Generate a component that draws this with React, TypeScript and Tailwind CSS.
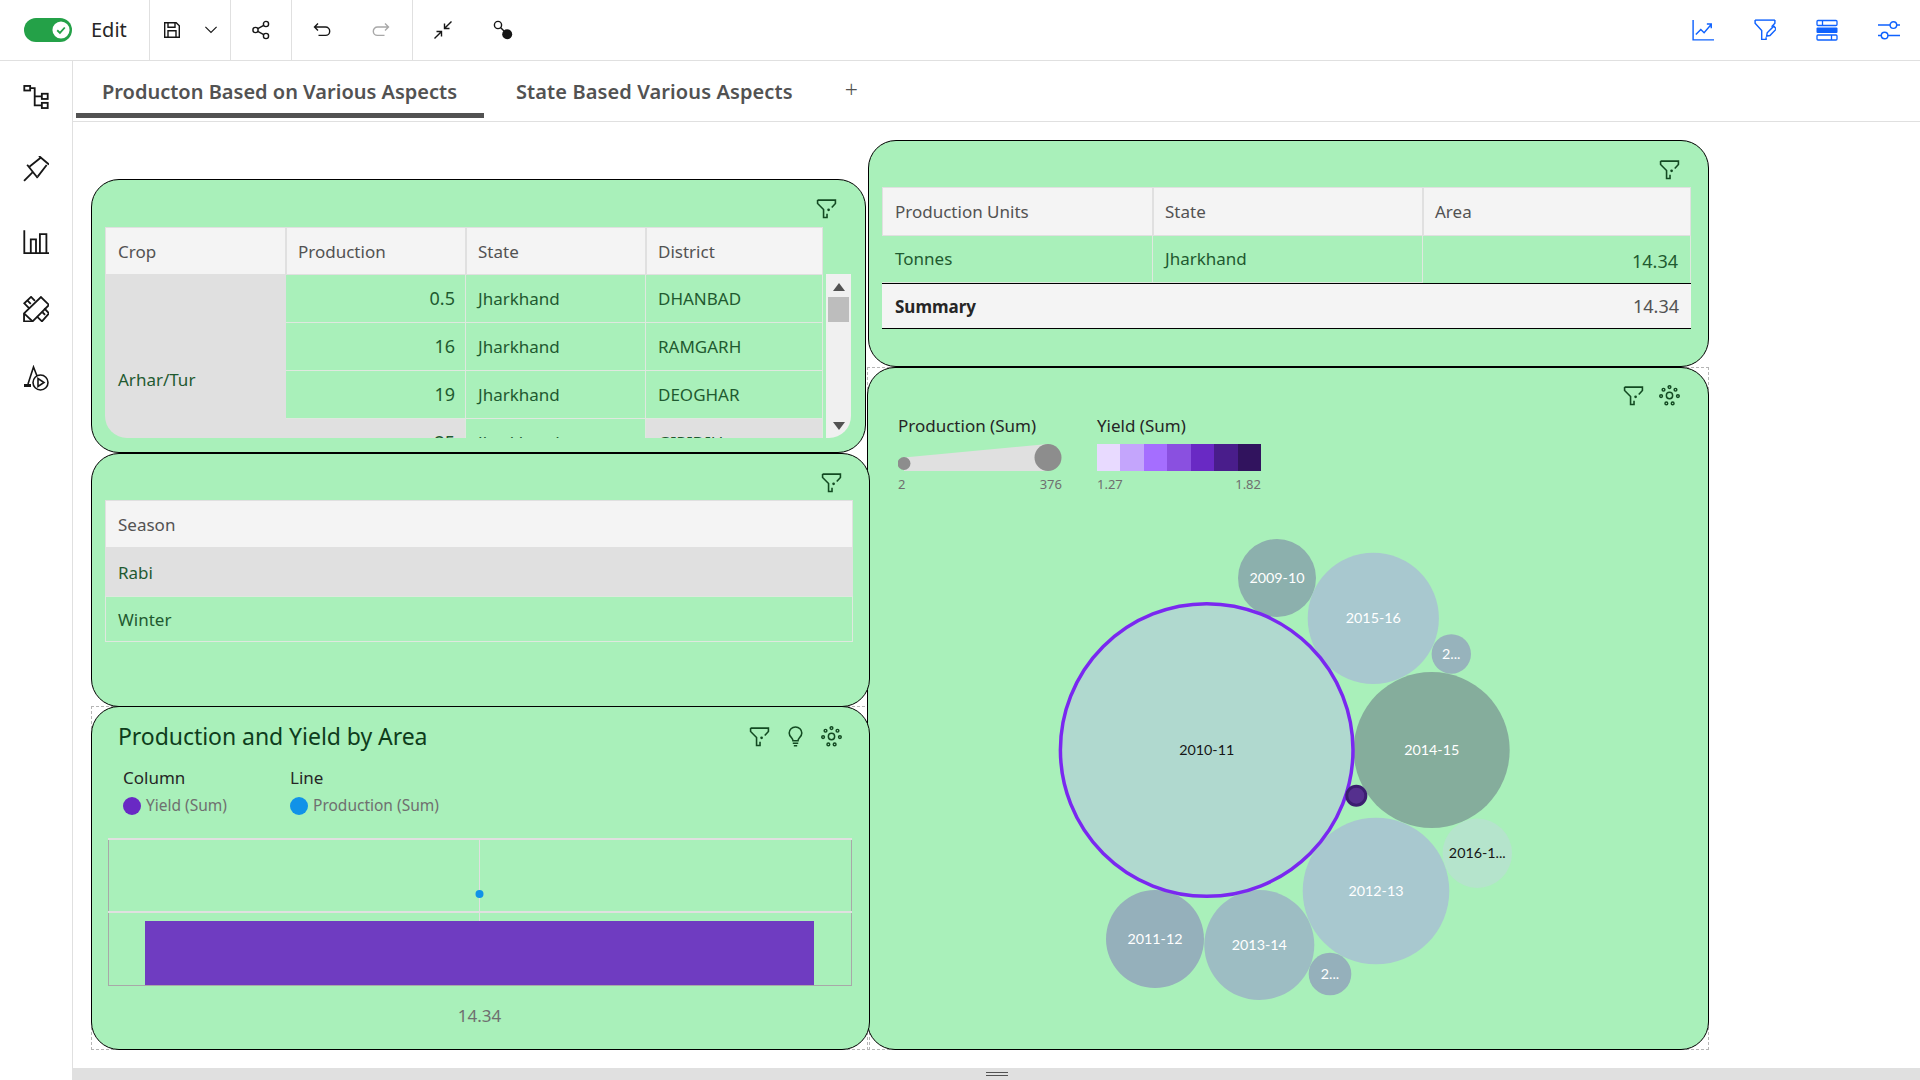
import React from "react";

type P = { className?: string };

const Funnel = ({ className = "" }: P) => (
  <svg viewBox="0 0 20 20" fill="none" stroke="currentColor" strokeWidth="1.5" className={`w-[21px] h-[21px] ${className}`}>
    <path d="M1.5 2H18.5V5.2L15 9" />
    <path d="M1.5 2V5.2L7.2 11V18.5H10.5V15" />
    <circle cx="12" cy="11.2" r="1.3" fill="currentColor" stroke="none" />
  </svg>
);

const Gear = ({ className = "" }: P) => (
  <svg viewBox="0 0 20 20" fill="none" stroke="currentColor" strokeWidth="1.4" className={`w-[21px] h-[21px] ${className}`}>
    <circle cx="10" cy="10" r="3" />
    <circle cx="10" cy="2" r="1.3" />
    <circle cx="4.3" cy="4.5" r="1.3" />
    <circle cx="15.7" cy="4.5" r="1.3" />
    <circle cx="2" cy="10.5" r="1.3" />
    <circle cx="18" cy="10.5" r="1.3" />
    <circle cx="7" cy="17.5" r="1.3" />
    <circle cx="13" cy="17.5" r="1.3" />
  </svg>
);

const Bulb = ({ className = "" }: P) => (
  <svg viewBox="0 0 20 20" fill="none" stroke="currentColor" strokeWidth="1.5" className={`w-[21px] h-[21px] ${className}`}>
    <path d="M7.6 14c0-2.6-3.6-3.6-3.6-7.4C4 3.5 6.6 1 10 1s6 2.5 6 5.6c0 3.8-3.6 4.8-3.6 7.4z" />
    <path d="M7.4 16.4h5.2M8.4 18.8h3.2" />
  </svg>
);

const Ic = ({ className = "", children, w = 1.4 }: P & { children: React.ReactNode; w?: number }) => (
  <svg viewBox="0 0 20 20" fill="none" stroke="currentColor" strokeWidth={w} className={className}>
    {children}
  </svg>
);

const Th = ({ children, first = false, className = "h-[48px]" }: { children?: React.ReactNode; first?: boolean; className?: string }) => (
  <div className={`flex items-center pt-[1px] ${first ? "pl-3" : "pl-[11px]"} bg-[#f4f4f4] border border-[#e0e0e0] text-[#525252] ${className}`}>{children}</div>
);

const Td = ({ children, right = false, gray = false }: { children?: React.ReactNode; right?: boolean; gray?: boolean }) => (
  <div className={`h-[48px] flex items-center border-b border-r border-[#dfe8df] text-[#1f5a30] ${right ? "justify-end pr-[10px] text-[18px]" : "pl-3"} ${gray ? "bg-[#e0e0e0]" : ""}`}>{children}</div>
);

const rows: [string, string, string, boolean, boolean][] = [
  ["0.5", "Jharkhand", "DHANBAD", false, false],
  ["16", "Jharkhand", "RAMGARH", false, false],
  ["19", "Jharkhand", "DEOGHAR", false, false],
  ["25", "Jharkhand", "GIRIDIH", true, true],
];

const bubbles = [
  { x: 1277, y: 578, r: 39, f: "#8cb0ad", t: "2009-10", c: "#ffffff" },
  { x: 1373.3, y: 618.3, r: 65.6, f: "#a8c8cf", t: "2015-16", c: "#ffffff" },
  { x: 1451.3, y: 654, r: 19.7, f: "#97b3bc", t: "2...", c: "#ffffff" },
  { x: 1431.7, y: 750, r: 78, f: "#85ad9c", t: "2014-15", c: "#ffffff" },
  { x: 1477.3, y: 853.3, r: 34.7, f: "#b5e4cc", t: "2016-1...", c: "#161616" },
  { x: 1376, y: 891, r: 73.3, f: "#a8c8cf", t: "2012-13", c: "#ffffff" },
  { x: 1155, y: 939, r: 49, f: "#95b0bb", t: "2011-12", c: "#ffffff" },
  { x: 1259.3, y: 945, r: 55, f: "#9dbdc3", t: "2013-14", c: "#ffffff" },
  { x: 1330, y: 974, r: 21.3, f: "#95b0bb", t: "2...", c: "#ffffff" },
];

const swatches = ["#e8daff", "#c4a5fc", "#a56eff", "#8a50e0", "#6929c4", "#491d8b", "#31135e"];

export default function App() {
  return (
    <div className="w-[1920px] h-[1080px] bg-white flex flex-col overflow-hidden font-['Noto_Sans',sans-serif] text-[17px] text-[#161616]">
      {/* toolbar */}
      <div className="h-[61px] shrink-0 flex border-b border-[#e0e0e0]">
        <div className="w-[150px] flex items-center pl-6 border-r border-[#e0e0e0]">
          <div className="w-12 h-6 rounded-full bg-[#24a148] flex items-center justify-end pr-[2px]">
            <svg viewBox="0 0 20 20" className="w-[18px] h-[18px]">
              <circle cx="10" cy="10" r="9.5" fill="#fff" />
              <path d="M5.8 10.3 8.8 13.2 14.2 7.2" fill="none" stroke="#24a148" strokeWidth="2" />
            </svg>
          </div>
          <span className="ml-[19px] text-[20px] leading-none text-[#262626]">Edit</span>
        </div>
        <div className="w-[81px] flex items-center pl-3 border-r border-[#e0e0e0]">
          <Ic className="w-5 h-5">
            <path d="M2.7 2.7h11.5l3.1 3.1v11.5H2.7z" />
            <path d="M6 2.7v4.6h7V2.7M6 17.3v-6.6h8v6.6" />
          </Ic>
          <Ic className="w-4 h-4 ml-[21px]">
            <path d="M3 6l7 7 7-7" />
          </Ic>
        </div>
        <div className="w-[61px] flex items-center justify-center border-r border-[#e0e0e0]">
          <Ic className="w-5 h-5">
            <circle cx="15" cy="4" r="2.6" />
            <circle cx="4.5" cy="10" r="2.6" />
            <circle cx="15" cy="16" r="2.6" />
            <path d="M6.8 8.7 12.7 5.3M6.8 11.3l5.9 3.4" />
          </Ic>
        </div>
        <div className="w-[121px] flex items-center pl-5 gap-[39px] border-r border-[#e0e0e0]">
          <Ic className="w-5 h-5">
            <path d="M6 3.5 2.5 7 6 10.5M2.5 7H13.5a4.2 4.2 0 0 1 0 8.4H6.5" />
          </Ic>
          <Ic className="w-5 h-5 text-[#a8a8a8]">
            <path d="M14 3.5 17.5 7 14 10.5M17.5 7H6.5a4.2 4.2 0 0 0 0 8.4h7" />
          </Ic>
        </div>
        <div className="flex items-center pl-5 gap-10">
          <Ic className="w-5 h-5">
            <path d="M1.5 18.5 8.3 11.7M3.5 11.5h5v5M18.5 1.5l-6.8 6.8M11.5 3.5v5h5" />
          </Ic>
          <svg viewBox="0 0 20 20" className="w-5 h-5">
            <circle cx="5" cy="5" r="3.6" fill="none" stroke="#161616" strokeWidth="1.4" />
            <path d="M7.5 7.5 12 12" stroke="#161616" strokeWidth="1.4" />
            <circle cx="14.2" cy="14.2" r="5" fill="#161616" />
          </svg>
        </div>
        <div className="ml-auto flex items-center gap-10 pr-5 text-[#0f62fe]">
          <Ic className="w-[22px] h-[22px]" w={1.3}>
            <path d="M1 1v18h19" />
            <path d="M3.5 14 8 9.5l3 3 6-7M13.5 4.5h4v4" />
          </Ic>
          <Ic className="w-[22px] h-[22px]" w={1.3}>
            <path d="M19 1V3.8L16 7" />
            <path d="M1 1H19" />
            <path d="M1 1V3.8L7 10.5V18.5H11V16.5" />
            <path d="M11.5 15.5 12 12.5 18 6.5 20.3 9 14.5 15z" />
          </Ic>
          <svg viewBox="0 0 22 22" className="w-[22px] h-[22px]">
            <rect x="1" y="1.5" width="20" height="5" rx="1" fill="none" stroke="#0f62fe" strokeWidth="1.3" />
            <rect x="0.5" y="8.5" width="21" height="5.5" rx="1" fill="#0f62fe" />
            <rect x="1" y="16" width="20" height="5" rx="1" fill="none" stroke="#0f62fe" strokeWidth="1.3" />
            <path d="M6.5 1.5v5M15.5 16v5" stroke="#0f62fe" strokeWidth="1.3" />
          </svg>
          <Ic className="w-[22px] h-[22px]" w={1.3}>
            <path d="M0 5.5h11M17 5.5h3M0 15h3M9 15h11" />
            <circle cx="14" cy="5.5" r="3" />
            <circle cx="6" cy="15" r="3" />
          </Ic>
        </div>
      </div>

      <div className="flex-1 flex min-h-0">
        {/* sidebar */}
        <div className="w-[73px] shrink-0 border-r border-[#e0e0e0] flex flex-col items-center pt-[23px] text-[#161616]">
          <Ic className="w-[26px] h-[26px]" w={1.4}>
            <rect x="1" y="1.5" width="4.5" height="3.5" />
            <rect x="14.5" y="7.5" width="4.5" height="4" />
            <rect x="14.5" y="14.5" width="4.5" height="4" />
            <path d="M5.5 3.2H9v13.3h5.5M9 9.5h5.5" />
          </Ic>
          <Ic className="w-[26px] h-[26px] mt-[46px]" w={1.4}>
            <path d="M0.8 19.2 7.5 12.4" />
            <path d="M3.2 6.7 11.3 16.9" />
            <path d="M4.9 8.2 13.8 1.2M11.3 15.9 18.2 6.9" />
            <path d="M12.3 0 20 6.5" />
          </Ic>
          <Ic className="w-[26px] h-[26px] mt-[47px]" w={1.4}>
            <path d="M1 1v17.5h19M6 18V8h4v10M13 18V4h5v14" />
          </Ic>
          <Ic className="w-[26px] h-[26px] mt-[41px]" w={1.4}>
            <path d="M.8 19.5V13.3L13.8.8 20 6.9 7.4 19.5z" />
            <path d="M.8 13.3 7.4 19.5" />
            <path d="M4.8 9.5 1 5.6 6.2.7 9.2 3.8M3.5 3.5 6 6" />
            <path d="M16.4 9.5 20 13.3 14.6 19.5 10.8 15.9M15 12.5l2 2" />
          </Ic>
          <svg viewBox="0 0 26 26" className="w-[26px] h-[26px] mt-[43px]" fill="none" stroke="#161616" strokeWidth="1.6">
            <path d="M5 19 10.5 2 14 11" />
            <path d="M1 20.5h7" strokeWidth="3" />
            <circle cx="17.5" cy="17.5" r="7.5" />
            <path d="M15 13.5v8l6-4z" />
          </svg>
        </div>

        <div className="flex-1 min-w-0 flex flex-col">
          {/* tabs */}
          <div className="h-[61px] shrink-0 border-b border-[#e0e0e0] flex items-start">
            <div className="ml-[3px] w-[408px] h-[57px] border-b-[5px] border-[#525252] pl-[26px] pt-[10px] flex items-center text-[20px] font-semibold text-[#525252] whitespace-nowrap">
              Producton Based on Various Aspects
            </div>
            <div className="h-[57px] pl-[32px] pb-[1px] pt-[5px] flex items-center text-[20px] tracking-[0.1px] font-semibold text-[#525252] whitespace-nowrap">
              State Based Various Aspects
            </div>
            <div className="ml-[52px] h-[57px] flex items-center text-[23px] font-light text-[#525252]">+</div>
          </div>

          {/* canvas */}
          <div className="flex-1 relative">
            <div className="absolute left-[18px] top-[584px] w-[779px] h-[344px] border border-dashed border-[#b5b5b5]" />
            <div className="absolute left-[794px] top-[245px] w-[842px] h-[683px] border border-dashed border-[#b5b5b5]" />

            {/* top right table */}
            <div className="absolute left-[795px] top-[18px] w-[841px] h-[227px] rounded-[28px] border border-black bg-[#a9f0ba] flex flex-col">
              <div className="h-[46px] pt-[18px] pr-[28px] flex justify-end text-[#134a22]">
                <Funnel />
              </div>
              <div className="ml-[13px] mr-[17px] grid grid-cols-[271px_270px_268px]">
                <Th first className="h-[49px]">Production Units</Th>
                <Th className="h-[49px]">State</Th>
                <Th className="h-[49px]">Area</Th>
                <div className="h-[47px] flex items-center pl-[13px] border-b border-r border-[#dfe8df] text-[#1f5a30]">Tonnes</div>
                <div className="h-[47px] flex items-center pl-3 border-b border-r border-[#dfe8df] text-[#1f5a30]">Jharkhand</div>
                <div className="h-[47px] flex items-end justify-end pb-[8px] px-3 text-[18px] text-[#1f5a30] border-r border-[#dfe8df]">14.34</div>
                <div className="col-span-2 h-[46px] flex items-center pl-[13px] pt-[1px] bg-[#f4f4f4] border-y border-black font-bold text-[#262626]">Summary</div>
                <div className="h-[46px] flex items-center justify-end px-3 bg-[#f4f4f4] border-y border-black text-[18px] text-[#525252]">14.34</div>
              </div>
            </div>

            {/* bubble panel */}
            <div className="absolute left-[794px] top-[245px] w-[842px] h-[683px] rounded-[28px] border border-black bg-[#a9f0ba] flex flex-col">
              <div className="h-[47px] pt-[17px] pr-[28px] flex justify-end gap-[15px] text-[#134a22]">
                <Funnel />
                <Gear />
              </div>
              <div className="pl-[30px] flex gap-[35px]">
                <div className="w-[164px] flex flex-col">
                  <div className="h-[22px] leading-[22px] text-[#262626] whitespace-nowrap">Production (Sum)</div>
                  <svg viewBox="0 0 164 27" className="w-[164px] h-[27px] mt-[7px]">
                    <path d="M6 13.5 150 0V27H6z" fill="#e0e0e0" />
                    <circle cx="6" cy="19.5" r="6.5" fill="#8d8d8d" />
                    <circle cx="150" cy="13.5" r="13.5" fill="#8d8d8d" />
                  </svg>
                  <div className="mt-[5px] h-4 flex justify-between text-[13px] leading-4 text-[#6f6f6f]">
                    <span>2</span>
                    <span>376</span>
                  </div>
                </div>
                <div className="w-[164px] flex flex-col">
                  <div className="h-[22px] leading-[22px] text-[#262626] whitespace-nowrap">Yield (Sum)</div>
                  <div className="flex h-[27px] mt-[7px]">
                    {swatches.map((c) => (
                      <div key={c} className="flex-1" style={{ background: c }} />
                    ))}
                  </div>
                  <div className="mt-[5px] h-4 flex justify-between text-[13px] leading-4 text-[#6f6f6f]">
                    <span>1.27</span>
                    <span>1.82</span>
                  </div>
                </div>
              </div>
              <svg viewBox="1040 520 500 500" className="w-[500px] h-[500px] ml-[172px] mt-[28px] shrink-0 font-['Lato',sans-serif]">
                {bubbles.map((b) => (
                  <circle key={b.t + b.x} cx={b.x} cy={b.y} r={b.r} fill={b.f} />
                ))}
                <circle cx="1206.7" cy="750" r="146.3" fill="#b0d9cf" stroke="#7a28f0" strokeWidth="3.5" />
                <circle cx="1356.3" cy="795.7" r="9.5" fill="#55308e" stroke="#3c1e70" strokeWidth="3" />
                {bubbles.map((b) => (
                  <text key={b.t + b.y} x={b.x} y={b.y + 5} textAnchor="middle" fontSize="14.3" fill={b.c}>
                    {b.t}
                  </text>
                ))}
                <text x="1206.7" y="755" textAnchor="middle" fontSize="14.3" fill="#161616">
                  2010-11
                </text>
              </svg>
            </div>

            {/* crop table */}
            <div className="absolute left-[18px] top-[57px] w-[775px] h-[274px] rounded-[28px] border border-black bg-[#a9f0ba] flex flex-col">
              <div className="h-[47px] pt-[18px] pr-[28px] flex justify-end text-[#134a22]">
                <Funnel />
              </div>
              <div className="ml-[13px] w-[746px] h-[211px] overflow-hidden rounded-b-[22px] flex">
                <div className="w-[718px] grid grid-cols-[181px_180px_180px_177px] content-start">
                  <Th first>Crop</Th>
                  <Th>Production</Th>
                  <Th>State</Th>
                  <Th>District</Th>
                  <div className="row-span-4 h-[192px] bg-[#e0e0e0] flex items-start pt-[92px] pl-[13px] text-[#1f5a30]">Arhar/Tur</div>
                  {rows.map((r) => (
                    <React.Fragment key={r[0]}>
                      <Td right gray={r[3]}>{r[0]}</Td>
                      <Td>{r[1]}</Td>
                      <Td gray={r[4]}>{r[2]}</Td>
                    </React.Fragment>
                  ))}
                </div>
                <div className="ml-[3px] w-[25px] mt-[47px] bg-[#f0f0f0] flex flex-col items-center pt-[9px] relative">
                  <svg viewBox="0 0 12 8" className="w-3 h-2 fill-[#525252]"><path d="M6 0l6 8H0z" /></svg>
                  <div className="w-[21px] h-[25px] mt-[6px] bg-[#bdbdbd]" />
                  <svg viewBox="0 0 12 8" className="w-3 h-2 mt-[100px] fill-[#525252]"><path d="M6 8 0 0h12z" /></svg>
                </div>
              </div>
            </div>

            {/* season table */}
            <div className="absolute left-[18px] top-[331px] w-[779px] h-[254px] rounded-[28px] border border-black bg-[#a9f0ba] flex flex-col">
              <div className="h-[46px] pt-[18px] pr-[27px] flex justify-end text-[#134a22]">
                <Funnel />
              </div>
              <div className="ml-[13px] w-[748px] flex flex-col">
                <Th first className="h-[48px] pt-[2px]">Season</Th>
                <div className="h-[48px] flex items-center pt-[1px] pl-[13px] bg-[#e0e0e0] text-[#1f5a30]">Rabi</div>
                <div className="h-[46px] flex items-center pt-[1px] pl-3 border border-[#dfe8df] text-[#1f5a30]">Winter</div>
              </div>
            </div>

            {/* combo chart */}
            <div className="absolute left-[18px] top-[584px] w-[779px] h-[344px] rounded-[28px] border border-black bg-[#a9f0ba] flex flex-col">
              <div className="h-[60px] shrink-0 pl-[26px] pr-[27px] pb-[2px] flex items-center justify-between">
                <span className="text-[23px] tracking-[-0.05px] text-[#0e3d1c] whitespace-nowrap">Production and Yield by Area</span>
                <div className="flex gap-[15px] text-[#134a22]">
                  <Funnel />
                  <Bulb />
                  <Gear />
                </div>
              </div>
              <div className="pl-[31px] flex text-[#262626]">
                <div className="w-[167px]">
                  <div className="h-[22px] leading-[22px]">Column</div>
                  <div className="h-[22px] mt-[6px] flex items-center gap-[5px] text-[15.5px] text-[#6f6f6f]">
                    <span className="w-[18px] h-[18px] rounded-full bg-[#6929c4]" />
                    <span>Yield (Sum)</span>
                  </div>
                </div>
                <div>
                  <div className="h-[22px] leading-[22px]">Line</div>
                  <div className="h-[22px] mt-[6px] flex items-center gap-[5px] text-[15.5px] text-[#6f6f6f]">
                    <span className="w-[18px] h-[18px] rounded-full bg-[#1192e8]" />
                    <span>Production (Sum)</span>
                  </div>
                </div>
              </div>
              <svg viewBox="108 838 744 148" className="w-[744px] h-[148px] ml-[16px] mt-[21px] shrink-0">
                <path d="M108.5 839v146.5M851.5 839v146.5" stroke="#a8a8a8" strokeWidth="1" />
                <path d="M108 839H852M108 912H852" stroke="#e0e0e0" strokeWidth="2" />
                <path d="M479.5 839V985" stroke="#e0e0e0" strokeWidth="1" />
                <rect x="145" y="921" width="669" height="64" fill="#6f3cc1" />
                <path d="M108 985.5H852" stroke="#a8a8a8" strokeWidth="1" />
                <circle cx="479.5" cy="894" r="4" fill="#1192e8" />
              </svg>
              <div className="mt-[18px] pr-[2px] h-6 leading-6 text-center text-[#6f6f6f]">14.34</div>
            </div>
          </div>

          {/* resize bar */}
          <div className="h-3 shrink-0 bg-[#e0e0e0] flex flex-col items-center justify-center gap-[2px]">
            <div className="w-[22px] h-[1px] bg-[#525252]" />
            <div className="w-[22px] h-[1px] bg-[#525252]" />
          </div>
        </div>
      </div>
    </div>
  );
}
